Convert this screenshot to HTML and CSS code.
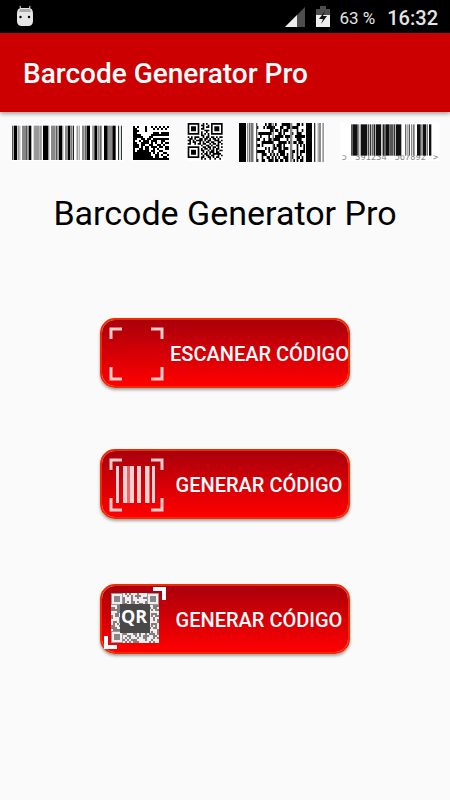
FILE: index.html
```html
<!DOCTYPE html>
<html lang="es">
<head>
<meta charset="utf-8">
<meta name="viewport" content="width=device-width, initial-scale=1">
<title>Barcode Generator Pro</title>
<link rel="stylesheet" href="styles.css">
</head>
<body>
<div class="status">
  <svg class="robot" viewBox="0 0 18 22" aria-hidden="true">
    <path d="M4 1l1 4M14 1l-1 4" stroke="#bbb" stroke-width="1.2"/>
    <path d="M1 9q0-6 4-6h8q4 0 4 6v7q0 5-5 5H6q-5 0-5-5z" fill="#e6e6e6"/>
    <path d="M4 4h10l1 3H3z" fill="#aaa"/>
    <circle cx="4.500" cy="12" r="1.200"/><circle cx="13" cy="12" r="1.200"/>
  </svg>
  <svg class="signal" viewBox="0 0 20 20" aria-hidden="true">
    <path d="M0 20L20 0v20z" fill="#4d4d4d"/><path d="M0 20L12 8v12z" fill="#eee"/>
  </svg>
  <svg class="battery" viewBox="0 0 14 21" aria-hidden="true">
    <path d="M0 3h4V0h6v3h4v6H0z" fill="#4d4d4d"/><path d="M0 9h14v12H0z" fill="#eee"/>
    <path d="M9 5L3 13h4l-2 5 6-8H7z" fill="#111"/>
  </svg>
  <span class="charge">63 %</span>
  <span class="clock">16:32</span>
</div>
<header class="appbar"><h1>Barcode Generator Pro</h1></header>
<main>
  <div class="codes" aria-hidden="true">
    <svg viewBox="30 30 342 126"><path d="M33 37h336v110H33z" fill="#fff"/><g id="linear"></g></svg>
    <svg viewBox="21 30 114 126"><path d="M22 38h112v108H22z" fill="#fff"/><path id="matrix"/></svg>
    <svg viewBox="159 30 159 126"><path d="M185 30h110v117H185z" fill="#fff"/><path id="qr"/></svg>
    <svg viewBox="27 30 258 126"><path d="M27 32h258v119H27z" fill="#fff"/><path id="stacked"/><g id="guards"></g></svg>
    <svg viewBox="9 30 321 126">
      <path d="M32 32h296v114H32z" fill="#fff"/>
      <g class="digits"><text x="35" y="145">5</text><text x="76" y="145">391234</text><text x="194" y="145">567892</text><text x="309" y="145">&gt;</text></g>
      <path d="M32 32h296v98H32z" fill="#fff"/>
      <g id="retail"></g>
    </svg>
  </div>
  <h2>Barcode Generator Pro</h2>
  <div class="actions">
    <button type="button">
      <svg viewBox="2 2 68 66" aria-hidden="true">
        <g class="corners"><path d="M11 21V11h11M51 11h11v10M11 49v12h11M51 61h11V49"/></g>
      </svg>
      <span>ESCANEAR CÓDIGO</span>
    </button>
    <button type="button">
      <svg viewBox="2 2 68 66" aria-hidden="true">
        <g class="corners"><path d="M11 21V11h11M51 11h11v10M11 49v12h11M51 61h11V49"/></g>
        <g class="bars"><path d="M16 17h3v37h-3zM23 17h4v37h-4zM30 17h4v37h-4zM37 17h4v37h-4zM45 17h4v37h-4zM52 17h3v37h-3z"/><path d="M27 17h3v37h-3zM49 17h1v37h-1z" opacity=".5"/></g>
      </svg>
      <span>GENERAR CÓDIGO</span>
    </button>
    <button type="button">
      <svg viewBox="2 2 68 66" aria-hidden="true">
        <path d="M11 9h48v50H11z" fill="#887c7c"/>
        <path id="badge" fill="#eee"/>
        <g fill="#eee"><path d="M11 9h12v12H11zM47 9h12v12H47zM11 47h12v12H11z" fill="#999"/><path d="M12 10h10v10H12zM48 10h10v10H48zM12 48h10v10H12z"/><path d="M14 12h6v6h-6zM50 12h6v6h-6zM14 50h6v6h-6z" fill="#888"/></g>
        <path d="M20 20h30v29H20z" fill="#484848"/>
        <text class="qrtext" x="34" y="39" text-anchor="middle">QR</text>
        <path d="M53 5h11v11M6 52v11h11" fill="none" stroke="#fff" stroke-width="4"/>
      </svg>
      <span>GENERAR CÓDIGO</span>
    </button>
  </div>
</main>
<script src="codes.js"></script>
</body>
</html>
```
FILE: styles.css
```css
* { box-sizing: border-box; }
body { margin: 0; min-height: 100vh; background: #fafafa; font-family: Roboto, "Liberation Sans", sans-serif; }
.status { height: 33px; padding: 0 12px 0 16px; display: flex; align-items: center; background: #000; color: #e4e4e4; }
.robot { width: 18px; height: 22px; margin-right: auto; margin-bottom: 2px; }
.signal { width: 20px; height: 20px; margin-right: 11px; }
.battery { width: 14px; height: 21px; margin-right: 9px; }
.charge { font-size: 17px; line-height: 20px; margin-right: 12px; padding-top: 2px; }
.clock { font-size: 20px; line-height: 24px; font-weight: 500; padding-top: 2px; }
.appbar { position: relative; height: 79px; padding: 2px 23px 0; display: flex; align-items: center; background: #c00; color: #fff; box-shadow: 0 2px 4px rgba(0, 0, 0, .35); }
h1 { margin: 0; font-size: 28px; line-height: 36px; font-weight: 500; }
.codes { display: grid; grid-template-columns: 114fr 38fr 53fr 86fr 107fr; gap: 8px; padding: 10px 10px 0; }
.codes svg { display: block; width: 100%; }
.digits { font-family: "DejaVu Sans Mono", monospace; font-size: 26px; fill: #888; }
h2 { margin: 29px 0 0; text-align: center; font-size: 34px; line-height: 40px; font-weight: 400; color: #000; }
.actions { display: flex; flex-direction: column; align-items: center; gap: 61px; padding: 85px 0 32px; }
button { display: flex; align-items: center; width: 250px; height: 70px; padding: 0; border: 2px solid #ee2c00; border-radius: 15px; background: linear-gradient(#a9000c, #f00) padding-box; color: #fff; font: 500 20px/24px Roboto, "Liberation Sans", sans-serif; box-shadow: 0 2px 3px rgba(0, 0, 0, .35); cursor: pointer; }
button:last-child { margin-top: 4px; }
button svg { flex: none; width: 68px; height: 66px; }
button span { flex: 1; text-align: center; white-space: nowrap; padding-top: 2px; }
.corners { fill: none; stroke: #fff; stroke-width: 3; opacity: .8; }
.bars { fill: #fff; opacity: .82; }
.qrtext { font: 700 18px "Open Sans", sans-serif; fill: #fff; }
```
FILE: codes.js
```js
// Bars are [start, end, shade] triples.
function drawBars(id, top, bottom, bars) {
  document.getElementById(id).innerHTML = bars.map(function (b) {
    return '<rect x="' + b[0] + '" y="' + top + '" width="' + (b[1] - b[0]) +
      '" height="' + (bottom - top) + '" fill="' + b[2] + '"/>';
  }).join('');
}

// Rows of modules: "#" is a filled cell.
function drawCells(id, x, y, w, h, rows) {
  var d = '';
  rows.forEach(function (row, r) {
    row.split('').forEach(function (c, i) {
      if (c === '#') d += 'M' + (x + i * w) + ' ' + (y + r * h) + 'h' + w + 'v' + h + 'h-' + w + 'z';
    });
  });
  document.getElementById(id).setAttribute('d', d);
}

function noise(cols, count, seed) {
  var rows = [];
  for (var r = 0; r < count; r++) {
    var row = '';
    for (var c = 0; c < cols; c++) {
      seed = (seed * 1103515245 + 12345) % 2147483648;
      row += seed / 2147483648 < 0.5 ? '#' : '.';
    }
    rows.push(row);
  }
  return rows;
}

drawBars('linear', 41, 144, [
  [36, 39, '#555'], [41, 51, '#000'], [53, 56, '#666'], [58, 61, '#999'],
  [66, 78, '#888'], [78, 81, '#555'], [82, 85, '#777'], [86, 94, '#000'],
  [101, 118, '#999'], [119, 122, '#666'], [123, 126, '#aaa'], [129, 145, '#000'],
  [145, 148, '#888'], [153, 167, '#888'], [168, 171, '#555'], [172, 176, '#777'],
  [177, 187, '#000'], [188, 190, '#888'], [195, 202, '#888'], [203, 211, '#000'],
  [212, 216, '#777'], [218, 222, '#222'], [230, 233, '#666'], [236, 239, '#888'],
  [246, 254, '#888'], [255, 259, '#666'], [260, 270, '#000'], [277, 281, '#777'],
  [283, 291, '#000'], [292, 299, '#888'], [300, 305, '#666'], [312, 323, '#000'],
  [324, 336, '#888'], [337, 347, '#000'], [354, 357, '#333'], [358, 362, '#ccd8dc'], [363, 366, '#333']
]);

drawCells('matrix', 24, 42, 6, 6, [
  '#.#...#..#.#.#.#.#',
  '##....#...#.#.#.#.',
  '###...#...........',
  '##........###.####',
  '####.....#########',
  '#####...##........',
  '##..##.##.########',
  '#..#.###.###..##..',
  '##..####.#.#..#.##',
  '###.##..##..##.#..',
  '###.#.##.###.##.##',
  '#..##.##..#.#...##',
  '#.######.##..##...',
  '#########.#.#..##.',
  '#########..##.#..#',
  '##########.##..##.',
  '##################'
]);

drawCells('qr', 188, 33, 5, 5, [
  '#######..#.#..#######',
  '#.....#.##..#.#.....#',
  '#.###.#..#.##.#.###.#',
  '#.###.#.##....#.###.#',
  '#.###.#...###.#.###.#',
  '#.....#.#..#..#.....#',
  '#######.#.#.#.#######',
  '........##..#........',
  '#.#.###..#.##.##.#.##',
  '.##.#..##.##.#.##.#..',
  '##.#.####.#.##..###.#',
  '.#.##..#.#.##.##..##.',
  '##..#.##.##..#.##.#.#',
  '........#..##.#..##..',
  '#######..##.##.##.#.#',
  '#.....#.#.##.#.#.##..',
  '#.###.#.##..#.##.#.##',
  '#.###.#..#.#.###.##..',
  '#.###.#.#.##.#.#####.',
  '#.....#..#.##.##..#.#',
  '#######.##..##.#.##..',
  '........#.#..#..#..#.'
]);

drawCells('stacked', 80, 33, 5, 9, noise(29, 13, 77));
drawBars('guards', 33, 150, [
  [27, 48, '#000'], [51, 55, '#888'], [57, 61, '#666'], [62, 66, '#777'], [67, 70, '#333'],
  [78, 82, '#555'], [128, 131, '#444'], [180, 187, '#888'],
  [228, 246, '#000'], [252, 256, '#333'], [263, 266, '#888'], [268, 272, '#555'], [277, 282, '#999']
]);

drawBars('retail', 37, 131, [
  [63, 68, '#555'], [68, 83, '#111'], [84, 88, '#888'],
  [92, 112, '#111'], [114, 118, '#444'], [120, 124, '#333'], [126, 130, '#666'], [131, 135, '#222'],
  [137, 153, '#111'], [155, 158, '#777'], [159, 164, '#222'], [166, 178, '#111'], [178, 190, '#555'],
  [191, 196, '#333'], [198, 214, '#111'], [225, 229, '#666'], [231, 234, '#aaa'], [236, 240, '#555'],
  [243, 247, '#888'], [249, 254, '#777'], [261, 272, '#111'], [274, 278, '#666'], [279, 289, '#111'],
  [291, 294, '#777'], [297, 304, '#111']
]);

drawCells('badge', 11, 9, 2, 2, noise(24, 25, 31));
```
